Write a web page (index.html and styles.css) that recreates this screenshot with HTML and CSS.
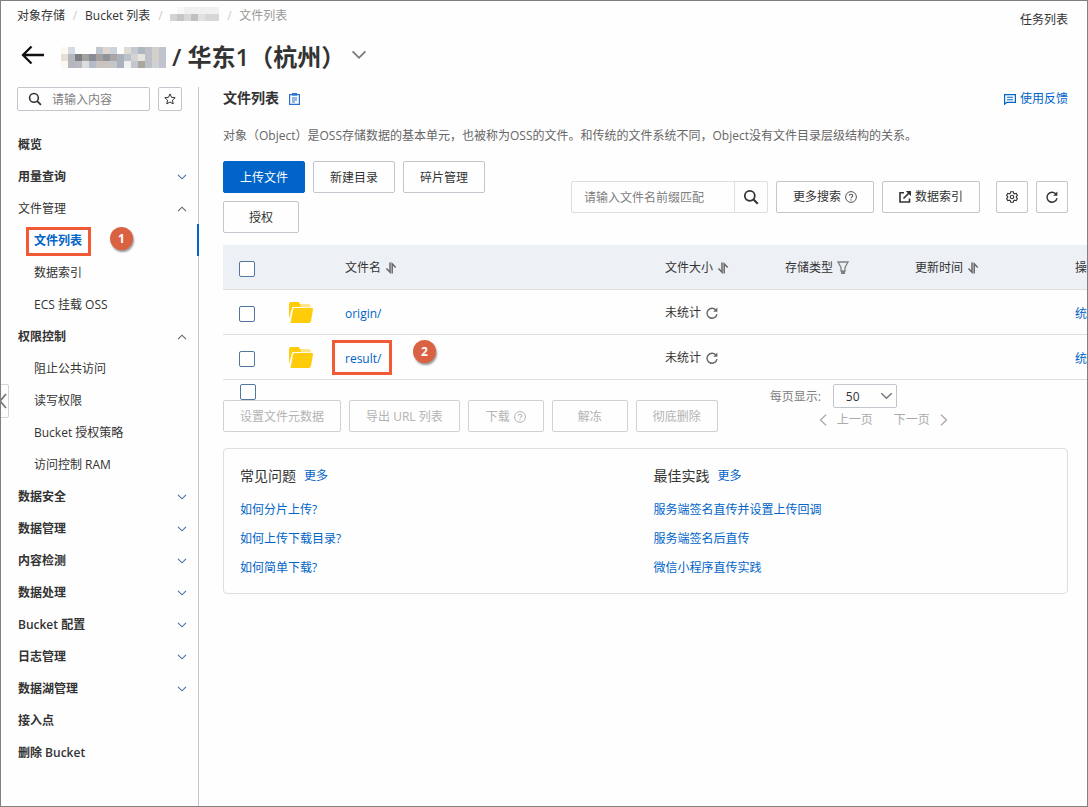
FILE: index.html
```html
<!DOCTYPE html>
<html lang="zh-CN">
<head>
<meta charset="utf-8">
<meta name="viewport" content="width=device-width, initial-scale=1">
<title>文件列表 - 对象存储</title>
<link rel="stylesheet" href="styles.css">
</head>
<body>
<svg class="sprite" aria-hidden="true">
  <symbol id="down" viewBox="0 0 10 6"><path d="M1 .8 5 4.8 9 .8" fill="none" stroke="currentColor" stroke-width="1.1"/></symbol>
  <symbol id="search" viewBox="0 0 16 16"><circle cx="6.8" cy="6.8" r="5" fill="none" stroke="currentColor" stroke-width="1.8"/><path d="m10.5 10.5 4.3 4.3" stroke="currentColor" stroke-width="2"/></symbol>
  <symbol id="refresh" viewBox="0 0 12 12"><path d="M10.2 3.4A5 5 0 1 0 11 7.2" fill="none" stroke="currentColor" stroke-width="1.4"/><path d="M11.4.6v4.2H7.2z" fill="currentColor"/></symbol>
  <symbol id="help" viewBox="0 0 12 12"><circle cx="6" cy="6" r="5.4" fill="none" stroke="currentColor"/><path d="M4.3 4.8C4.3 2.6 7.8 2.7 7.8 4.7 7.8 5.9 6 5.9 6 7.3M6 8.2v1.2" fill="none" stroke="currentColor" stroke-width="1.1"/></symbol>
  <symbol id="sort" viewBox="0 0 12 12"><path d="M5 .5v9.700L1.500 6.500M7.200 11.500V1.800l3.500 3.700" fill="none" stroke="currentColor" stroke-width="1.500"/></symbol>
  <symbol id="folder" viewBox="0 0 24 21"><path d="M0 2q0-2 2-2h7q1 0 1.500 1l.7 1.500H20q1.500 0 1.500 1.500v1H4.500q-1.200 0-1.600 1.200L0 17z" fill="#ffcc0a"/><path d="M11.500 3H20q1 0 1 1v1.200H12z" fill="#ffe58a"/><path d="M5.600 6H23q1.200 0 1 1.200L22 19q-.4 2-2.200 2H1.500L4 7.500Q4.300 6 5.600 6z" fill="#ffcc0a"/></symbol>
</svg>
<div class="frame">
  <header class="top">
    <div class="top-row">
      <nav class="crumbs" aria-label="面包屑">
        <a href="#">对象存储</a><span class="sep">/</span><a href="#">Bucket 列表</a><span class="sep">/</span>
        <svg class="mask-s" viewBox="0 0 49 14" aria-hidden="true"><path fill="#f0f0f1" d="M14 0h35v14H14z"/><path fill="#f7f7f7" d="M7 0h7v7H7z"/><path fill="#d4d2d3" d="M0 7h14v7H0z"/><path fill="#c6c4c7" d="M7 7h7v7H7z"/><path fill="#d6d7d9" d="M14 7h7v7h-7zM35 7h7v7h-7z"/><path fill="#c2bfc3" d="M21 7h7v7h-7z"/><path fill="#e2e0e1" d="M28 7h7v7h-7z"/><path fill="#d6d6d7" d="M42 7h7v7h-7z"/></svg>
        <span class="sep">/</span><span class="current">文件列表</span>
      </nav>
      <a class="tasks" href="#">任务列表</a>
    </div>
    <div class="title-row">
      <button class="plain back" aria-label="返回"><svg width="24" height="20" viewBox="0 0 24 20"><path d="M23 10H2M10.500 1.500 2 10l8.500 8.500" fill="none" stroke="#111" stroke-width="2.300"/></svg></button>
      <svg class="mask-l" viewBox="0 0 105 21" aria-hidden="true"><path fill="#fbf7f1" d="M0 0h7v7H0z"/><path fill="#d5dbe2" d="M7 0h7v7H7z"/><path fill="#bfc6cf" d="M35 0h7v7h-7z"/><path fill="#e2d7d0" d="M42 0h7v7h-7z"/><path fill="#cbd3dc" d="M49 0h7v7h-7z"/><path fill="#e0dbd4" d="M63 0h7v7h-7z"/><path fill="#c4cad2" d="M70 0h7v7h-7z"/><path fill="#aeb6bf" d="M77 0h7v7h-7z"/><path fill="#bdc0c8" d="M84 0h7v21h-7z"/><path fill="#d3cfc9" d="M91 0h7v14h-7z"/><path fill="#c0c4ce" d="M98 0h7v21h-7z"/><path fill="#e7ded6" d="M0 7h7v7H0z"/><path fill="#b3b6bc" d="M7 7h7v14H7z"/><path fill="#7d7f83" d="M14 7h7v7h-7z"/><path fill="#a3a19f" d="M21 7h7v7h-7z"/><path fill="#878d96" d="M28 7h7v7h-7z"/><path fill="#a5a09f" d="M35 7h7v7h-7z"/><path fill="#8d949c" d="M42 7h7v7h-7z"/><path fill="#a9a6a5" d="M49 7h7v7h-7z"/><path fill="#aab1bd" d="M56 7h7v14h-7z"/><path fill="#bac2ce" d="M63 7h7v7h-7z"/><path fill="#d5d4d3" d="M70 7h7v7h-7z"/><path fill="#e6e4de" d="M77 7h7v7h-7z"/><path fill="#fbf7f3" d="M0 14h7v7H0z"/><path fill="#b7b9be" d="M14 14h7v7h-7z"/><path fill="#dbdddf" d="M21 14h7v7h-7z"/><path fill="#b4bbc6" d="M28 14h7v7h-7z"/><path fill="#cbc3bf" d="M35 14h14v7H35z"/><path fill="#c4c6cb" d="M49 14h7v7h-7z"/><path fill="#f1f1f1" d="M63 14h7v7h-7z"/><path fill="#c1c6cf" d="M70 14h7v7h-7z"/><path fill="#a9a6a2" d="M77 14h7v7h-7z"/><path fill="#d0d1d3" d="M91 14h7v7h-7z"/></svg>
      <h1>/ 华东1（杭州）</h1>
      <button class="plain" aria-label="切换 Bucket"><svg class="chev-l"><use href="#down"/></svg></button>
    </div>
  </header>
  <div class="body">
    <aside class="side">
      <div class="side-search">
        <label class="side-box"><svg class="i14"><use href="#search"/></svg><input type="text" placeholder="请输入内容" aria-label="请输入内容"></label>
        <button class="star" aria-label="收藏"><svg width="12" height="12" viewBox="0 0 12 12"><path d="m6 .9 1.500 3.400 3.700.4-2.800 2.500.8 3.700L6 9l-3.200 1.900.8-3.700L.8 4.700l3.700-.4z" fill="none" stroke="#333" stroke-width="1"/></svg></button>
      </div>
      <nav class="menu" aria-label="Bucket 菜单">
        <a href="#">概览</a>
        <button>用量查询<svg class="chev"><use href="#down"/></svg></button>
        <button class="light">文件管理<svg class="chev up"><use href="#down"/></svg></button>
        <a class="sub active" href="#"><span class="marked">文件列表</span><span class="step step-nav">1</span></a>
        <a class="sub" href="#">数据索引</a>
        <a class="sub" href="#">ECS 挂载 OSS</a>
        <button>权限控制<svg class="chev up"><use href="#down"/></svg></button>
        <a class="sub" href="#">阻止公共访问</a>
        <a class="sub" href="#">读写权限</a>
        <a class="sub" href="#">Bucket 授权策略</a>
        <a class="sub" href="#">访问控制 RAM</a>
        <button>数据安全<svg class="chev"><use href="#down"/></svg></button>
        <button>数据管理<svg class="chev"><use href="#down"/></svg></button>
        <button>内容检测<svg class="chev"><use href="#down"/></svg></button>
        <button>数据处理<svg class="chev"><use href="#down"/></svg></button>
        <button>Bucket 配置<svg class="chev"><use href="#down"/></svg></button>
        <button>日志管理<svg class="chev"><use href="#down"/></svg></button>
        <button>数据湖管理<svg class="chev"><use href="#down"/></svg></button>
        <a href="#">接入点</a>
        <a href="#">删除 Bucket</a>
      </nav>
    </aside>
    <main class="main">
      <div class="head">
        <h2>文件列表</h2>
        <svg width="11" height="12" viewBox="0 0 11 12" aria-hidden="true"><path d="M.6 1.600h9.800v9.800H.6z" fill="none" stroke="#2a72d0" stroke-width="1.200"/><path d="M3 0h5v2.600H3z" fill="#2a72d0"/><path d="M3 5h5M3 7h5M3 9h3" stroke="#2a72d0"/></svg>
        <a class="feedback" href="#"><svg width="12" height="12" viewBox="0 0 12 12"><path d="M.6 11.200V1.600h10.800v7.800H2.800z" fill="none" stroke="currentColor" stroke-width="1.200"/><path d="M3 4.300h6M3 6.700h6" stroke="currentColor" stroke-width="1.100"/></svg>使用反馈</a>
      </div>
      <p class="desc">对象（Object）是OSS存储数据的基本单元，也被称为OSS的文件。和传统的文件系统不同，Object没有文件目录层级结构的关系。</p>
      <div class="toolbar">
        <div class="actions">
          <button class="btn primary">上传文件</button>
          <button class="btn">新建目录</button>
          <button class="btn">碎片管理</button>
          <button class="btn">授权</button>
        </div>
        <div class="tools">
          <div class="search"><input type="text" placeholder="请输入文件名前缀匹配" aria-label="请输入文件名前缀匹配"><button class="plain" aria-label="搜索"><svg class="i16"><use href="#search"/></svg></button></div>
          <button class="btn">更多搜索<svg class="i12 gray"><use href="#help"/></svg></button>
          <button class="btn"><svg width="12" height="12" viewBox="0 0 12 12"><path d="M5 1.800H1v9.200h9.500V7.500M4.500 7.500l6-6" fill="none" stroke="currentColor" stroke-width="1.600"/><path d="M6.800 0H12v5.200z" fill="currentColor"/></svg>数据索引</button>
          <div class="icons">
            <button class="btn square" aria-label="设置"><svg width="12" height="12" viewBox="0 0 12 12"><path d="m4.700.7h2.600l.4 1.600 1 .5 1.500-.5 1.200 2.100-1.100 1.100v1l1.100 1.100-1.200 2.100-1.500-.5-1 .5-.4 1.600H4.700l-.4-1.600-1-.5-1.500.5L.6 7.600l1.100-1.100v-1L.6 4.400l1.200-2.100 1.500.5 1-.5z" fill="none" stroke="currentColor" stroke-width="1.100"/><circle cx="6" cy="6" r="1.700" fill="none" stroke="currentColor" stroke-width="1.100"/></svg></button>
            <button class="btn square" aria-label="刷新"><svg class="i12"><use href="#refresh"/></svg></button>
          </div>
        </div>
      </div>
      <div class="table-wrap">
        <table>
          <colgroup><col class="c-check"><col class="c-icon"><col class="c-name"><col class="c-size"><col class="c-type"><col class="c-time"><col></colgroup>
          <thead>
            <tr>
              <th class="low"><input type="checkbox" aria-label="全选"></th><th></th>
              <th>文件名<svg class="i12 sort"><use href="#sort"/></svg></th>
              <th>文件大小<svg class="i12 sort"><use href="#sort"/></svg></th>
              <th>存储类型<svg class="filter" viewBox="0 0 12 13"><path d="M1 1h10L8 6.500V10H4V6.500z" fill="none" stroke="currentColor" stroke-width="1.300"/><path d="M4 10h4v3H4z" fill="currentColor"/></svg></th>
              <th>更新时间<svg class="i12 sort"><use href="#sort"/></svg></th>
              <th>操</th>
            </tr>
          </thead>
          <tbody>
            <tr>
              <td class="low"><input type="checkbox" aria-label="选择 origin/"></td>
              <td class="pic"><svg class="folder"><use href="#folder"/></svg></td>
              <td class="low"><a href="#">origin/</a></td>
              <td>未统计<svg class="i12 re"><use href="#refresh"/></svg></td><td></td><td></td>
              <td class="low"><a href="#">统</a></td>
            </tr>
            <tr>
              <td class="low"><input type="checkbox" aria-label="选择 result/"></td>
              <td class="pic"><svg class="folder"><use href="#folder"/></svg></td>
              <td class="low anchor"><a class="marked" href="#">result/</a><span class="step step-row">2</span></td>
              <td>未统计<svg class="i12 re"><use href="#refresh"/></svg></td><td></td><td></td>
              <td class="low"><a href="#">统</a></td>
            </tr>
          </tbody>
        </table>
      </div>
      <div class="foot">
        <div class="batch">
          <input type="checkbox" aria-label="全选">
          <div class="batch-row">
            <button class="btn" disabled>设置文件元数据</button>
            <button class="btn" disabled>导出 URL 列表</button>
            <button class="btn" disabled>下载<svg class="i12"><use href="#help"/></svg></button>
            <button class="btn" disabled>解冻</button>
            <button class="btn" disabled>彻底删除</button>
          </div>
        </div>
        <div class="pager">
          <div class="size"><label for="page-size">每页显示:</label><span class="select"><select id="page-size"><option>50</option></select><svg><use href="#down"/></svg></span></div>
          <div class="turn">
            <button class="plain" disabled><svg width="8" height="12" viewBox="0 0 8 12"><path d="M7 .8 1.500 6 7 11.200" fill="none" stroke="currentColor" stroke-width="1.300"/></svg>上一页</button>
            <button class="plain" disabled>下一页<svg width="8" height="12" viewBox="0 0 8 12"><path d="M1 .8 6.500 6 1 11.200" fill="none" stroke="currentColor" stroke-width="1.300"/></svg></button>
          </div>
        </div>
      </div>
      <section class="card">
        <div>
          <h3>常见问题<a href="#">更多</a></h3>
          <ul><li><a href="#">如何分片上传?</a></li><li><a href="#">如何上传下载目录?</a></li><li><a href="#">如何简单下载?</a></li></ul>
        </div>
        <div>
          <h3>最佳实践<a href="#">更多</a></h3>
          <ul><li><a href="#">服务端签名直传并设置上传回调</a></li><li><a href="#">服务端签名后直传</a></li><li><a href="#">微信小程序直传实践</a></li></ul>
        </div>
      </section>
    </main>
  </div>
  <button class="collapse" aria-label="收起菜单"><svg width="6" height="16" viewBox="0 0 6 16"><path d="M5 1-1 8l6 7" fill="none" stroke="#777" stroke-width="1.800"/></svg></button>
</div>
</body>
</html>
```

FILE: styles.css
```css
* { box-sizing: border-box; }
body {
  margin: 0;
  background: #fefefe;
  color: #333;
  font: 12px/16px "Open Sans", "Noto Sans CJK SC", sans-serif;
}
a { color: #0064c8; text-decoration: none; }
h1, h2, h3, p, ul { margin: 0; padding: 0; }
ul { list-style: none; }
svg { display: block; flex: none; }
button, input, select { font: inherit; color: inherit; }
button { padding: 0; background: none; }
input::placeholder { color: #808080; opacity: 1; }
.sprite { position: absolute; width: 0; height: 0; }
.plain { display: flex; align-items: center; border: 0; }
.i12 { width: 12px; height: 12px; }
.i14 { width: 14px; height: 14px; }
.i16 { width: 16px; height: 16px; }
.gray { color: #555; }

.frame {
  position: relative;
  display: flex;
  flex-direction: column;
  min-height: 100vh;
  border: 1px solid #808080;
  overflow: hidden;
}

/* Header */
.top { padding: 7px 19px 14px 16px; }
.top-row { display: flex; justify-content: space-between; height: 16px; }
.crumbs { display: flex; align-items: center; }
.crumbs a, .tasks { color: #333; }
.sep { width: 20px; text-align: center; color: #ccc; }
.crumbs .current { color: #999; }
.mask-s { width: 49px; height: 14px; margin-bottom: 4px; }
.tasks { margin-top: 4px; }
.title-row { display: flex; align-items: center; height: 32px; margin-top: 17px; }
.back { margin: 0 16px 4px 4px; }
.mask-l { width: 105px; height: 21px; margin-right: 6px; }
h1 { font-size: 24px; font-weight: 600; line-height: 32px; white-space: nowrap; }
.chev-l { width: 16px; height: 10px; margin: 0 0 4px 6px; color: #777; }

/* Sidebar */
.body { display: flex; flex: 1; }
.side { flex: none; width: 198px; border-right: 1px solid #c0c6cc; }
.side-search { display: flex; gap: 8px; padding-left: 16px; }
.side-box {
  display: flex; align-items: center; gap: 10px;
  width: 133px; height: 24px; padding-left: 10px;
  border: 1px solid #c0c6cc; border-radius: 2px;
}
.side-box input { width: 80px; padding: 2px 0 0; border: 0; outline: 0; background: none; }
.star {
  display: grid; place-items: center; width: 24px; height: 24px;
  border: 1px solid #c0c6cc; border-radius: 2px;
}
.menu { display: flex; flex-direction: column; padding-top: 17px; }
.menu a, .menu button {
  position: relative; display: flex; align-items: center; justify-content: space-between;
  height: 32px; padding: 2px 11px 0 17px; border: 0; color: #333; font-weight: 600;
}
.menu .light, .menu .sub { font-weight: 400; }
.menu .sub { justify-content: flex-start; padding-left: 33px; }
.menu .active { margin-right: -1px; border-right: 2px solid #0064c8; color: #0064c8; font-weight: 600; }
.chev { width: 10px; height: 6px; color: #46719c; }
.up { transform: rotate(180deg); color: #666; }

/* Step annotations */
.marked { position: relative; }
.marked::after {
  content: ""; position: absolute; inset: -6px -9px -7px -8px;
  border: 3px solid #f15a35;
}
td .marked::after { inset: -10px -11px -8px -13px; }
.step {
  position: absolute; width: 23px; height: 23px; border-radius: 50%;
  background: #da6243; box-shadow: 1px 2px 2px #999;
  color: #fff; font-weight: 700; line-height: 23px; text-align: center;
}
.step-nav { left: 109px; top: 3px; }
.step-row { left: 84px; top: 5px; }
.anchor { position: relative; }

/* Main */
.main { flex: 1; min-width: 0; padding: 0 19px 0 24px; }
.head { display: flex; align-items: center; height: 24px; }
h2 { margin: 0 10px 2px 0; font-size: 14px; font-weight: 600; line-height: 20px; }
.feedback { display: flex; align-items: center; gap: 4px; margin-left: auto; }
.desc { margin: 16px 0; line-height: 18px; color: #666; }
.toolbar { display: flex; align-items: center; gap: 8px; }
.actions { display: flex; flex: 1; flex-wrap: wrap; gap: 8px; }
.tools { display: flex; gap: 8px; }
.btn {
  display: flex; align-items: center; justify-content: center; gap: 4px;
  min-width: 76px; height: 32px; padding: 0 16px;
  border: 1px solid #c0c6cc; border-radius: 2px; white-space: nowrap;
}
.actions .btn, .batch-row .btn { padding-top: 2px; }
.btn.primary { border-color: #0064c8; background: #0064c8; color: #fff; }
.btn.square { min-width: 32px; padding: 0; }
.btn:disabled { border-color: #cfd1d4; color: #b3b3b3; }
.icons { display: flex; gap: 8px; margin-left: 8px; }
.search { display: flex; width: 197px; height: 32px; border: 1px solid #dedede; border-radius: 2px; }
.search input { flex: 1; min-width: 0; padding: 2px 0 0 12px; border: 0; outline: 0; background: none; }
.search button { width: 33px; justify-content: center; border-left: 1px solid #dedede; }

/* File table */
.table-wrap { margin: 12px -19px 0 0; }
table { width: 100%; table-layout: fixed; border-collapse: separate; border-spacing: 0; }
.c-check { width: 50px; }
.c-icon { width: 56px; }
.c-name { width: 320px; }
.c-size { width: 120px; }
.c-type { width: 130px; }
.c-time { width: 160px; }
th, td {
  height: 45px; padding: 2px 0 0 16px; border-bottom: 1px solid #dedede;
  text-align: left; font-weight: 400; white-space: nowrap; vertical-align: middle;
}
th { background: #edf1f6; }
.low { padding-top: 4px; }
.pic { padding-top: 0; }
th svg, td svg { display: inline-block; vertical-align: -2px; }
.sort { margin-left: 4px; color: #666; }
.filter { width: 12px; height: 13px; margin-left: 4px; color: #808080; }
.re { margin-left: 5px; color: #666; }
td .folder { width: 24px; height: 21px; vertical-align: middle; }
input[type="checkbox"] {
  display: block; appearance: none; width: 16px; height: 16px; margin: 0;
  border: 1px solid #52769f; border-radius: 2px; background: #fff;
}

/* Table footer */
.foot { display: flex; gap: 52px; padding: 4px 0 16px; }
.batch > input { margin-left: 17px; }
.batch-row { display: flex; gap: 8px; }
.size { display: flex; align-items: center; gap: 12px; color: #808080; }
.size label { padding-top: 2px; }
.select { position: relative; color: #333; }
select {
  display: block; appearance: none; width: 64px; height: 24px; padding: 1px 0 0 12px;
  border: 1px solid #c0c6cc; border-radius: 2px; background: none;
}
.select svg { position: absolute; right: 4px; top: 8px; width: 13px; height: 8px; color: #777; }
.turn { display: flex; gap: 21px; height: 24px; padding-left: 49px; }
.turn button { gap: 10px; color: #aaa; }

/* Help links */
.card {
  display: grid; grid-template-columns: 1fr 1fr; gap: 16px;
  padding: 16px 16px 11px; border: 1px solid #dedede; border-radius: 4px;
}
h3 { display: flex; gap: 8px; margin-bottom: 8px; font-size: 14px; font-weight: 400; line-height: 22px; }
h3 a { font-size: 12px; }
li { line-height: 29px; }

/* Handle over the left edge that folds the sidebar */
.collapse {
  position: absolute; left: -1px; top: 383px;
  display: flex; align-items: center; width: 9px; height: 34px;
  border: 1px solid #d4d4d4; border-radius: 0 2px 2px 0; background: #fefefe;
}
```
